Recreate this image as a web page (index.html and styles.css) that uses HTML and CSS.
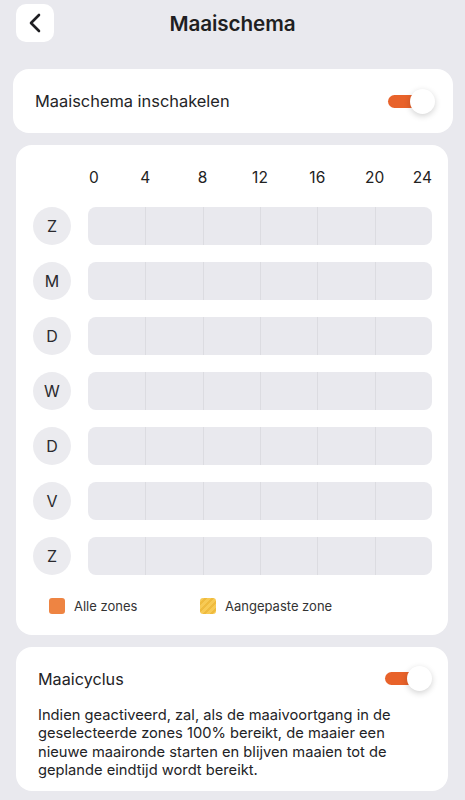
FILE: index.html
```html
<!DOCTYPE html>
<html lang="nl">
  <head>
    <meta charset="UTF-8" />
    <meta name="viewport" content="width=device-width, initial-scale=1.0" />
    <title>Maaischema</title>
    <link rel="stylesheet" href="styles.css">
  </head>
  <body>
    <header class="topbar">
      <button class="back-btn" type="button" aria-label="Terug">
        <svg width="14" height="20" viewBox="0 0 14 20">
          <path d="M11 2 L3 10 L11 18" fill="none" stroke="#1f1f22" stroke-width="2.6" stroke-linecap="round" stroke-linejoin="round" />
        </svg>
      </button>
      <h1>Maaischema</h1>
      <span class="spacer"></span>
    </header>

    <section class="card card-switch">
      <span class="label">Maaischema inschakelen</span>
      <span class="toggle"><span class="track"></span><span class="knob"></span></span>
    </section>

    <section class="card schedule">
      <div class="grid">
        <span></span>
        <div class="hours">
          <span class="h first">0</span>
          <span class="h">4</span>
          <span class="h">8</span>
          <span class="h">12</span>
          <span class="h">16</span>
          <span class="h last"><span class="h-mid">20</span><span>24</span></span>
        </div>

        <span class="day">Z</span>
        <div class="bar"><i></i><i></i><i></i><i></i><i></i><i></i></div>
        <span class="day">M</span>
        <div class="bar"><i></i><i></i><i></i><i></i><i></i><i></i></div>
        <span class="day">D</span>
        <div class="bar"><i></i><i></i><i></i><i></i><i></i><i></i></div>
        <span class="day">W</span>
        <div class="bar"><i></i><i></i><i></i><i></i><i></i><i></i></div>
        <span class="day">D</span>
        <div class="bar"><i></i><i></i><i></i><i></i><i></i><i></i></div>
        <span class="day">V</span>
        <div class="bar"><i></i><i></i><i></i><i></i><i></i><i></i></div>
        <span class="day">Z</span>
        <div class="bar"><i></i><i></i><i></i><i></i><i></i><i></i></div>
      </div>

      <div class="legend">
        <span class="legend-item"><span class="swatch all"></span>Alle zones</span>
        <span class="legend-item"><span class="swatch custom"></span>Aangepaste zone</span>
      </div>
    </section>

    <section class="card cycle">
      <div class="cycle-head">
        <span class="label">Maaicyclus</span>
        <span class="toggle"><span class="track"></span><span class="knob"></span></span>
      </div>
      <p>Indien geactiveerd, zal, als de maaivoortgang in de geselecteerde zones 100% bereikt, de maaier een nieuwe maaironde starten en blijven maaien tot de geplande eindtijd wordt bereikt.</p>
    </section>
  </body>
</html>
```

FILE: styles.css
```css
body {
  margin: 0;
  background: #e9e9ee;
  font-family: Inter, "Noto Sans", sans-serif;
  color: #1f1f22;
}
.topbar {
  display: flex;
  align-items: center;
  justify-content: space-between;
  padding: 4px 16px 0;
  height: 38px;
}
.back-btn {
  width: 38px;
  height: 38px;
  border: none;
  border-radius: 10px;
  background: #fff;
  display: flex;
  align-items: center;
  justify-content: center;
  padding: 0;
}
.topbar h1 {
  margin: 0;
  font-size: 20.7px;
  font-weight: 600;
  letter-spacing: -0.1px;
}
.spacer {
  width: 38px;
}
.card {
  background: #fff;
  border-radius: 16px;
  margin: 0 17px 12px 16px;
}
.card-switch {
  margin: 27px 12px 12px 13px;
  height: 64px;
  padding: 0 18px 0 22px;
  display: flex;
  align-items: center;
  justify-content: space-between;
}
.label {
  font-size: 16.4px;
  color: #232326;
}
.toggle {
  position: relative;
  width: 47px;
  height: 25px;
  display: inline-block;
}
.toggle .track {
  position: absolute;
  left: 0;
  top: 6px;
  width: 40px;
  height: 13px;
  border-radius: 7px;
  background: #e8622a;
}
.toggle .knob {
  position: absolute;
  right: 0;
  top: 0;
  width: 25px;
  height: 25px;
  border-radius: 50%;
  background: #fff;
  box-shadow: 0 2px 6px rgba(0, 0, 0, 0.18);
}

/* schema */
.schedule {
  padding: 22px 16px 21px 17px;
}
.grid {
  display: grid;
  grid-template-columns: 38px 1fr;
  column-gap: 17px;
  row-gap: 17px;
}
.hours {
  display: grid;
  grid-template-columns: repeat(6, 1fr);
  height: 22px;
  line-height: 22px;
  font-size: 15.5px;
  color: #222;
  margin-bottom: 1px;
}
.h {
  justify-self: start;
  transform: translateX(-50%);
}
.h.first {
  transform: none;
  padding-left: 1px;
}
.h.last {
  justify-self: stretch;
  transform: none;
  display: flex;
  justify-content: space-between;
}
.h-mid {
  transform: translateX(-50%);
}
.day {
  width: 38px;
  height: 38px;
  border-radius: 50%;
  background: #ebebef;
  display: flex;
  align-items: center;
  justify-content: center;
  font-size: 16px;
  color: #2a2a2d;
}
.bar {
  height: 38px;
  border-radius: 8px;
  background: #e9e9ee;
  display: grid;
  grid-template-columns: repeat(6, 1fr);
  overflow: hidden;
}
.bar i {
  border-left: 1px solid #dcdce1;
}
.bar i:first-child {
  border-left: none;
}
.legend {
  display: flex;
  margin: 23px 0 0 16px;
  height: 16px;
  align-items: center;
}
.legend-item {
  width: 151px;
  display: flex;
  align-items: center;
  font-size: 13px;
  color: #333;
}
.swatch {
  width: 16px;
  height: 16px;
  border-radius: 3px;
  margin-right: 9px;
}
.swatch.all {
  background: #ee8442;
}
.swatch.custom {
  background: repeating-linear-gradient(135deg, #f7ca55 0 3px, #efbb3e 3px 5px);
}

/* maaicyclus */
.cycle {
  padding: 19px 16px 11px 22px;
}
.cycle-head {
  display: flex;
  align-items: center;
  justify-content: space-between;
  height: 25px;
}
.cycle .label {
  font-size: 16.2px;
}
.cycle p {
  margin: 15px 0 0;
  font-size: 14.7px;
  line-height: 18.4px;
  color: #232326;
}
```
